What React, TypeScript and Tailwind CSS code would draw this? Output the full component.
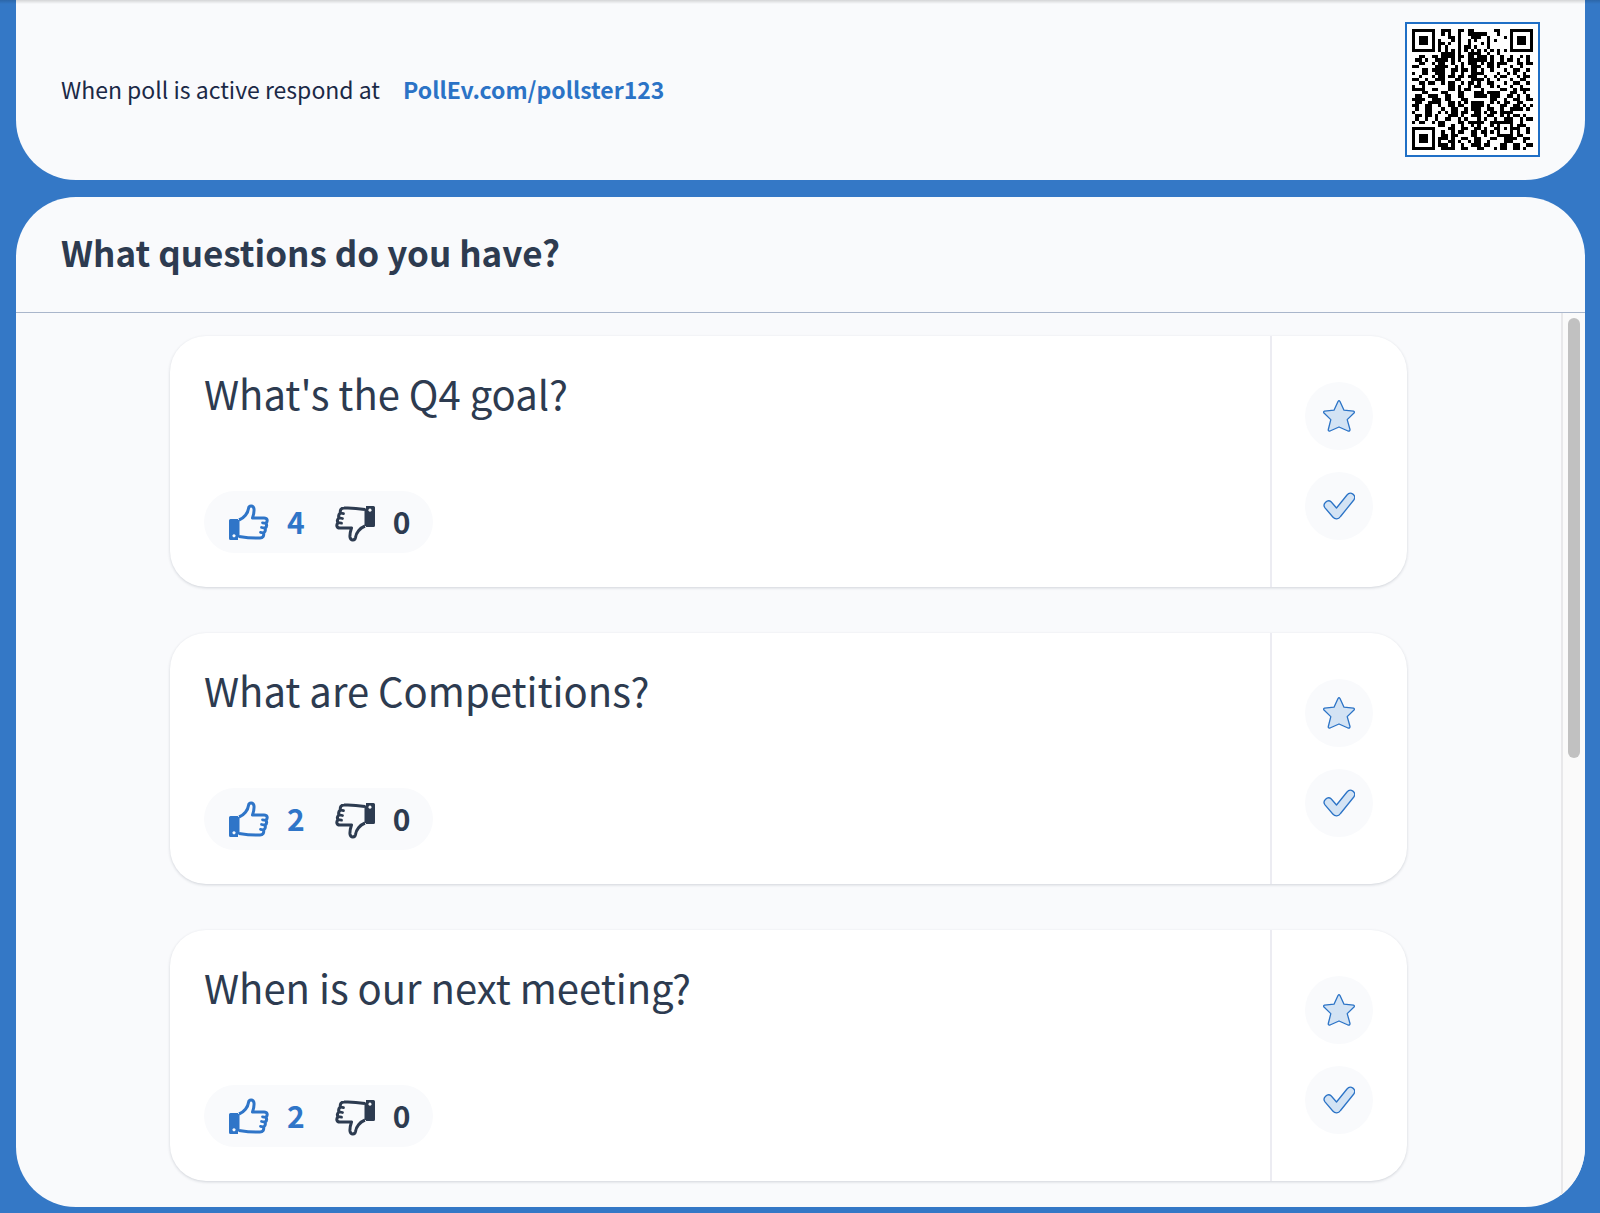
import React from 'react';

interface Question {
  id: number;
  text: string;
  up: number;
  down: number;
}

const questions: Question[] = [
  { id: 1, text: "What's the Q4 goal?", up: 4, down: 0 },
  { id: 2, text: 'What are Competitions?', up: 2, down: 0 },
  { id: 3, text: 'When is our next meeting?', up: 2, down: 0 },
];

// One string per row, # is a dark module
const qrRows = [
  '#######..###..##.##......##...#######',
  '#.....#..#.#..#..######...#...#.....#',
  '#.###.#....##.#...###..#....#.#.###.#',
  '#.###.#.#...#.#..#.#...#.#....#.###.#',
  '#.###.#.##.#..#..#...#.#......#.###.#',
  '#.....#.#.#...#.##.#...#......#.....#',
  '#######.#.#.#.#.#.#.#.#.#.#.#.#######',
  '.........####.#..####..#..#..........',
  '..##..##.####.##.##.###.#..#..#..#.#.',
  '.##.#..####.#.#..######.#..#.##.#..#.',
  '..##..#.##..#..#.###.#.##.###...##.##',
  '##.....####..#.#..###..##.#...#..#...',
  '...##.####..##.##.##.#..#...#..##..#.',
  '#..##..###..#..#..####....#..#.#..#..',
  '..#...#.##.##.##.###..#..#.##...#.##.',
  '##..#..###...##...####.#..#...#..##..',
  '..##.##..#.##..#.##.#..##...#..##..#.',
  '#..#.......##.#..#.##...#.#...#..#...',
  '####..##...##.#.##...#.....##..#.###.',
  '...##....##...##...###.####...##..#..',
  '.##..###..##..##...####.###..##.#..#.',
  '####..###.##...##.......##..#..##..##',
  '.##..####..##.#.#.####..#.#.##..##...',
  '##..##..#..##.##..####.#...##..##.#.#',
  '.#..##...#..##..#.###..##..#..####.#.',
  '#...##..#.#.##.##..##.#.##.####......',
  '.##.##.#...###.#..###..##..#.#.##.#..',
  '.#..#..#..##..#.#...#.#..#..###..#.##',
  '#.##..#.##....##.#####..#######..#...',
  '........##..#..#..#.#...#.#...#.###..',
  '#######....##..##..##.#..##.#.###..#.',
  '#.....#..#..#.##..##.##.#.#...#.#..#.',
  '#.###.#..##.##....##..#...#####.##...',
  '#.###.#.###.#..##..##...##..####..##.',
  '#.###.#.#..##.#..#.##..#....###...#..',
  '#.....#.###.#..#..###.##...##..##..##',
  '#######..####..##...##...#.##..##.#..',
];

const QrCode: React.FC = () => (
  <svg viewBox="0 0 37 37" className="size-[121px]" shapeRendering="crispEdges" role="img" aria-label="QR code">
    {qrRows.map((row, y) =>
      row.split('').map((cell, x) =>
        cell === '#' ? <rect key={`${x}-${y}`} x={x} y={y} width="1" height="1" fill="#000" /> : null
      )
    )}
  </svg>
);

const ThumbUp: React.FC = () => (
  <svg viewBox="0 0 40 36" className="h-9 w-10" aria-hidden="true">
    <path
      d="M10 16C15 14 19 9 19.500 4.500C20 1.200 24.500 1.200 25 5C25.300 8 24.500 11 23.500 14H35C38.500 14 39 17 37 19.300C38 21 37.500 23 36 24.200C36.700 26 36 28 34.700 29C35 32 34 34 31 34C23 34.500 16 33.500 10 32.500"
      fill="none"
      stroke="currentColor"
      strokeWidth="3"
      strokeLinejoin="round"
    />
    <path d="M37 19.300L33.500 18.800M36 24.200L32.500 23.500M34.700 29L31.500 28.300" stroke="currentColor" strokeWidth="2.8" strokeLinecap="round" />
    <path fillRule="evenodd" d="M1.500 15H9V16H10.500V33.500H9V36H1.500Q0 36 0 34.500V16.500Q0 15 1.500 15ZM5 30.200a1.600 1.600 0 1 0 0.010 0Z" fill="currentColor" />
  </svg>
);

const ThumbDown: React.FC = () => (
  <span className="mt-1 block rotate-180">
    <ThumbUp />
  </span>
);

const StarIcon: React.FC = () => (
  <svg viewBox="0 0 32 32" className="size-8" aria-hidden="true">
    <path
      d="M15 1.500Q16 0 17 1.500L21 10.200L30.500 11.200Q32 11.600 31 13L24.200 19.600L27 29.500Q27 31.500 25 31L16 27L7 31Q5 31.500 5.300 29.500L7.800 19.600L1 13Q0 11.600 1.500 11.200L11 10.200Z"
      fill="#d3e3f4"
      stroke="#2b73c6"
      strokeWidth="1.300"
      strokeLinejoin="round"
    />
  </svg>
);

const CheckIcon: React.FC = () => (
  <svg viewBox="0 0 32 28" className="h-7 w-8" aria-hidden="true">
    <path
      d="M2 15.800C-1 12 4.500 6.500 8.300 10L13.500 16L24 3C27.500 -1.500 34 3.500 30.800 8L17.500 24.500C15.500 27.500 12 27.500 9.800 25Z"
      fill="#d3e3f4"
      stroke="#2b73c6"
      strokeWidth="1.300"
      strokeLinejoin="round"
    />
  </svg>
);

const QuestionCard: React.FC<{ question: Question }> = ({ question }) => (
  <li className="flex h-[251px] rounded-[36px] bg-white shadow-[0_1px_3px_rgba(30,41,59,0.18)]">
    <div className="flex flex-1 flex-col items-start justify-between px-[34px] pt-[27px] pb-[34px]">
      <h2 className="text-[40px] leading-[60px] text-[#2d3b50]">{question.text}</h2>
      <div className="flex h-[62px] items-center gap-[30px] rounded-full bg-[#f9fafc] pr-[23px] pl-[25px] text-[30px] leading-9 font-bold">
        <button type="button" aria-label="Upvote" className="flex items-center gap-[18px] text-[#2f75c8]">
          <ThumbUp />
          <span className="pb-[3px]">{question.up}</span>
        </button>
        <button type="button" aria-label="Downvote" className="flex items-center gap-[18px] text-[#2d3b50]">
          <ThumbDown />
          <span className="pb-[3px]">{question.down}</span>
        </button>
      </div>
    </div>
    <div className="flex flex-col items-center justify-center gap-[22px] border-l-2 border-[#ececf2] pr-[34px] pb-[2px] pl-[33px]">
      <button type="button" aria-label="Star" className="flex size-[68px] items-center justify-center rounded-full bg-[#f9fafc]">
        <StarIcon />
      </button>
      <button type="button" aria-label="Mark as answered" className="flex size-[68px] items-center justify-center rounded-full bg-[#f9fafc]">
        <CheckIcon />
      </button>
    </div>
  </li>
);

export default function App() {
  return (
    <div className="relative min-h-screen bg-[#3478c6] pr-[15px] pb-[6px] pl-4 font-['Noto_Sans_CJK_SC','Noto_Sans',sans-serif]">
      <div className="absolute inset-x-0 top-0 h-1 bg-gradient-to-b from-black/15 to-transparent" />

      {/* Join instructions */}
      <header className="flex h-[180px] items-center justify-between rounded-b-[60px] bg-[#f9fafc] px-[45px] pb-[2px]">
        <p className="flex gap-[23px] text-[23px] leading-9 text-[#1b2947]">
          <span>When poll is active respond at</span>
          <a href="#join" className="font-bold text-[#2b73c6]">PollEv.com/pollster123</a>
        </p>
        <div className="border-2 border-[#1f6fc6] bg-white p-[5px]">
          <QrCode />
        </div>
      </header>

      {/* Questions */}
      <main className="mt-[17px] overflow-hidden rounded-[60px] bg-[#f9fafc]">
        <div className="border-b border-[#a9b6cb] px-[45px] pt-[27px] pb-[33px]">
          <h1 className="text-[35px] leading-[55px] font-semibold text-[#2d3b50]">What questions do you have?</h1>
        </div>
        <div className="flex">
          <ul className="flex-1 px-[154px] pt-[23px] pb-[26px] space-y-[46px]">
            {questions.map((q) => (
              <QuestionCard key={q.id} question={q} />
            ))}
          </ul>
          <div className="w-6 border-l-2 border-[#e8e8ea] bg-[#fafafa] px-[5px] pt-[5px]">
            <div className="h-[440px] w-3 rounded-full bg-[#c1c1c1]" />
          </div>
        </div>
      </main>
    </div>
  );
}
